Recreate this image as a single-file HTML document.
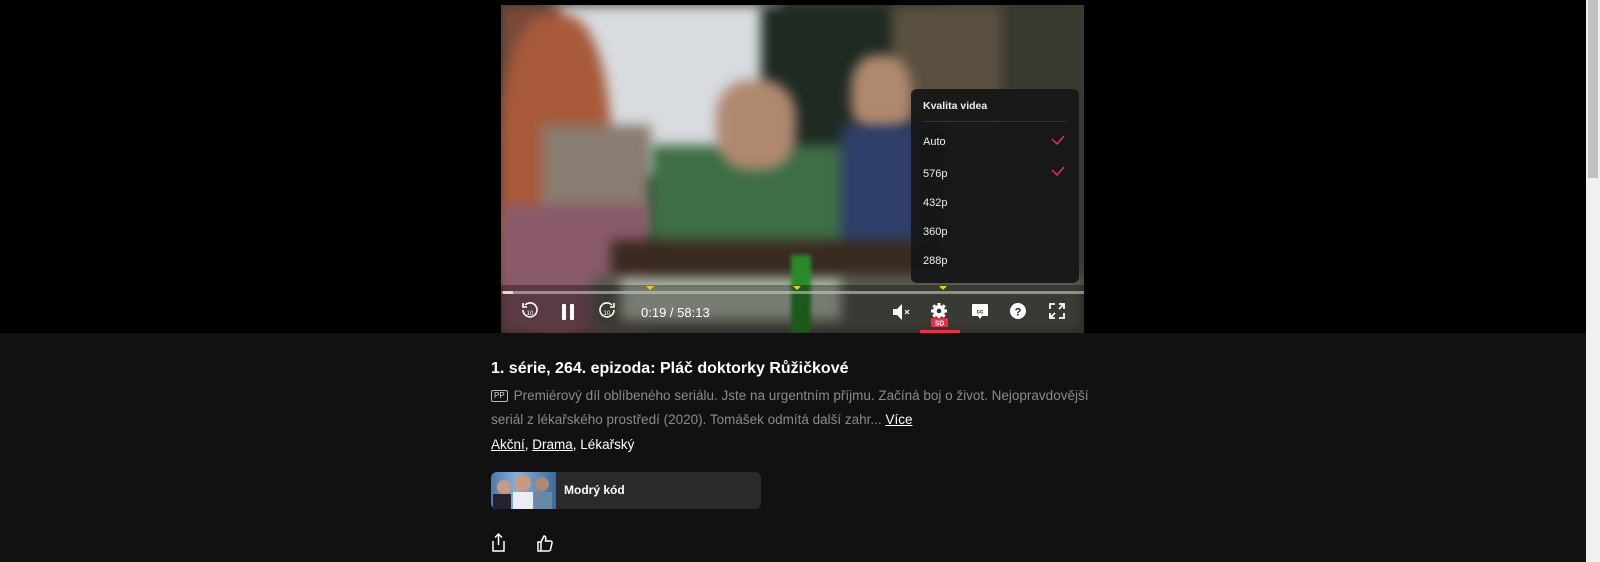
<!DOCTYPE html>
<html><head><meta charset="utf-8"><style>
*{margin:0;padding:0;box-sizing:border-box}
body{width:1600px;height:562px;overflow:hidden;background:#111;font-family:"Liberation Sans",sans-serif;position:relative}
.top{position:absolute;left:0;top:0;width:1586px;height:333px;background:#000}
.sb{position:absolute;left:1586px;top:0;width:14px;height:562px;background:#f0f0f0}
.sb i{position:absolute;left:2px;top:0;width:10px;height:178px;background:#c1c1c1}
.vid{position:absolute;left:501px;top:5px;width:583px;height:328px;overflow:hidden;background:#3b3a30}
.vid div{position:absolute;filter:blur(6px)}
.ab{position:absolute}
.menu{position:absolute;left:911px;top:89px;width:168px;height:194px;background:rgba(22,22,24,.93);border-radius:6px;color:#eee;font-size:11px}
.menu span{position:absolute;left:12px}
.ck{position:absolute;left:139px}
.t{position:absolute;color:#fff}
</style></head><body>
<div class="top"></div>
<div class="sb"><i></i></div>
<div class="vid">
 <div style="left:50px;top:0;width:230px;height:170px;background:#d8dbe0"></div>
 <div style="left:260px;top:0;width:180px;height:230px;background:#1e2a22"></div>
 <div style="left:390px;top:0;width:110px;height:120px;background:#5a5040"></div>
 <div style="left:0;top:0;width:60px;height:328px;background:#7a4a3a"></div>
 <div style="left:0;top:10px;width:110px;height:320px;background:#a85a3a;border-radius:40%"></div>
 <div style="left:40px;top:120px;width:110px;height:110px;background:#8a7c70"></div>
 <div style="left:0;top:200px;width:150px;height:128px;background:#8a5a6a"></div>
 <div style="left:150px;top:140px;width:220px;height:120px;background:#3e6e46"></div>
 <div style="left:215px;top:75px;width:80px;height:90px;background:#b08870;border-radius:40%"></div>
 <div style="left:350px;top:50px;width:60px;height:80px;background:#b08870;border-radius:40%"></div>
 <div style="left:340px;top:120px;width:80px;height:130px;background:#2e3f6a"></div>
 <div style="left:110px;top:235px;width:330px;height:40px;background:#3a2a20"></div>
 <div style="left:90px;top:270px;width:493px;height:58px;background:#5a5a50"></div>
 <div style="left:120px;top:275px;width:220px;height:40px;background:#b8c0b0"></div>
 <div style="left:290px;top:250px;width:20px;height:78px;background:#2a8a2a;filter:blur(2px)"></div>
 <div style="left:0;top:280px;width:583px;height:48px;background:rgba(0,0,0,.35);filter:none"></div>
</div>
<div class="ab" style="left:501px;top:291px;width:583px;height:3px;background:rgba(200,200,200,.6)"></div>
<div class="ab" style="left:501px;top:291px;width:12px;height:3px;background:#ddd"></div>
<div class="ab" style="left:501px;top:291px;width:2px;height:3px;background:#e8304a"></div>
<svg class="ab" style="left:0;top:0" width="1100" height="340">
 <g fill="#f5d000"><path d="M646 286h8l-4 4z"/><path d="M793 286h8l-4 4z"/><path d="M939 286h8l-4 4z"/></g>
 <g fill="none" stroke="#fff" stroke-width="1.6">
  <path d="M525 305a7 7 0 1 1-2 5"/><path d="M523 303v4h4"/>
  <path d="M612 305a7 7 0 1 0 2 5"/><path d="M614 303v4h-4"/>
 </g>
 <text x="530" y="315" font-size="6" fill="#fff" text-anchor="middle" font-family="Liberation Sans">10</text>
 <text x="607" y="315" font-size="6" fill="#fff" text-anchor="middle" font-family="Liberation Sans">10</text>
 <rect x="562" y="304" width="4" height="16" rx="1" fill="#fff"/><rect x="570" y="304" width="4" height="16" rx="1" fill="#fff"/>
 <text x="641" y="317" font-size="13" fill="#fff" font-family="Liberation Sans">0:19  /  58:13</text>
 <path d="M893 309h4l5-5v16l-5-5h-4z" fill="#fff"/><path d="M905 310l4 4M909 310l-4 4" stroke="#fff" stroke-width="1.2"/>
 <g transform="translate(939 311)" fill="#fff"><circle r="6"/><g stroke="#fff" stroke-width="3"><path d="M0-8v16M-8 0h16M-5.7-5.7l11.4 11.4M5.7-5.7l-11.4 11.4"/></g><circle r="2.3" fill="#333"/></g>
 <rect x="931" y="318" width="17" height="9" rx="1.5" fill="#e8304a"/>
 <text x="939.5" y="325.5" font-size="7" font-weight="bold" fill="#fff" text-anchor="middle" font-family="Liberation Sans">SD</text>
 <rect x="920" y="330" width="40" height="3" fill="#e8304a"/>
 <path d="M973 304h14a1 1 0 0 1 1 1v10a1 1 0 0 1-1 1h-5l-2 3-2-3h-5a1 1 0 0 1-1-1v-10a1 1 0 0 1 1-1z" fill="#fff"/>
 <text x="980" y="313.5" font-size="6" font-weight="bold" fill="#333" text-anchor="middle" font-family="Liberation Sans">cc</text>
 <circle cx="1018" cy="311" r="8" fill="#fff"/>
 <text x="1018" y="315.5" font-size="11" font-weight="bold" fill="#222" text-anchor="middle" font-family="Liberation Sans">?</text>
 <g fill="none" stroke="#fff" stroke-width="1.8"><path d="M1050 309v-5h5M1059 304h5v5M1064 313v5h-5M1055 318h-5v-5M1051 317l4-4M1063 305l-4 4"/></g>
</svg>
<div class="menu">
 <span style="top:11px;font-weight:bold;font-size:10.5px">Kvalita videa</span>
 <div style="position:absolute;left:12px;right:12px;top:32px;height:1px;background:#333"></div>
 <span style="top:47px">Auto</span><span style="top:79px">576p</span><span style="top:108px">432p</span><span style="top:137px">360p</span><span style="top:166px">288p</span>
 <svg class="ck" style="top:44px" width="16" height="14"><path d="M2 6l5 5 7-8" fill="none" stroke="#e8304a" stroke-width="1.5"/></svg>
 <svg class="ck" style="top:75px" width="16" height="14"><path d="M2 6l5 5 7-8" fill="none" stroke="#e8304a" stroke-width="1.5"/></svg>
</div>
<div class="t" style="left:491px;top:360px;font-size:16px;font-weight:bold">1. série, 264. epizoda: Pláč doktorky Růžičkové</div>
<div class="t" style="left:491px;top:384px;font-size:13.5px;color:#8a8a8a;line-height:24px;width:620px"><span style="display:inline-block;border:1px solid #bbb;border-radius:2px;color:#ddd;font-size:8px;padding:0 2px;line-height:10px;vertical-align:2px;margin-right:6px">PP</span>Premiérový díl oblíbeného seriálu. Jste na urgentním příjmu. Začíná boj o život. Nejopravdovější seriál z lékařského prostředí (2020). Tomášek odmítá další zahr... <u style="color:#fff">Více</u></div>
<div class="t" style="left:491px;top:437px;font-size:13.5px"><u>Akční</u>, <u>Drama</u>, Lékařský</div>
<div class="ab" style="left:491px;top:472px;width:270px;height:37px;background:#2a2a2d;border-radius:6px;overflow:hidden">
 <div style="position:absolute;left:0;top:0;width:65px;height:37px;background:linear-gradient(90deg,#4a7ab0,#8ab0d8 40%,#3a6aa0)"></div>
 <div style="position:absolute;left:6px;top:8px;width:14px;height:14px;border-radius:50%;background:#c89a80"></div>
 <div style="position:absolute;left:24px;top:3px;width:16px;height:16px;border-radius:50%;background:#c89a80"></div>
 <div style="position:absolute;left:44px;top:5px;width:14px;height:14px;border-radius:50%;background:#b08a70"></div>
 <div style="position:absolute;left:2px;top:22px;width:18px;height:15px;background:#223"></div>
 <div style="position:absolute;left:22px;top:20px;width:20px;height:17px;background:#e8eef5"></div>
 <div style="position:absolute;left:43px;top:20px;width:18px;height:17px;background:#6a88a8"></div>
 <div style="position:absolute;left:73px;top:11px;color:#fff;font-size:12px;font-weight:bold">Modrý kód</div>
</div>
<svg class="ab" style="left:488px;top:532px" width="80" height="22">
 <g fill="none" stroke="#fff" stroke-width="1.5"><path d="M5 9v10h11V9M10.5 2v11M7 5.5l3.5-3.5 3.5 3.5"/>
 <path d="M50 10h3v9h-3zM53 10l3-6c2 0 2 2 1.5 5h5a1.5 1.5 0 0 1 1.5 2l-1.5 6.5a2 2 0 0 1-2 1.5H53"/></g>
</svg>
</body></html>
